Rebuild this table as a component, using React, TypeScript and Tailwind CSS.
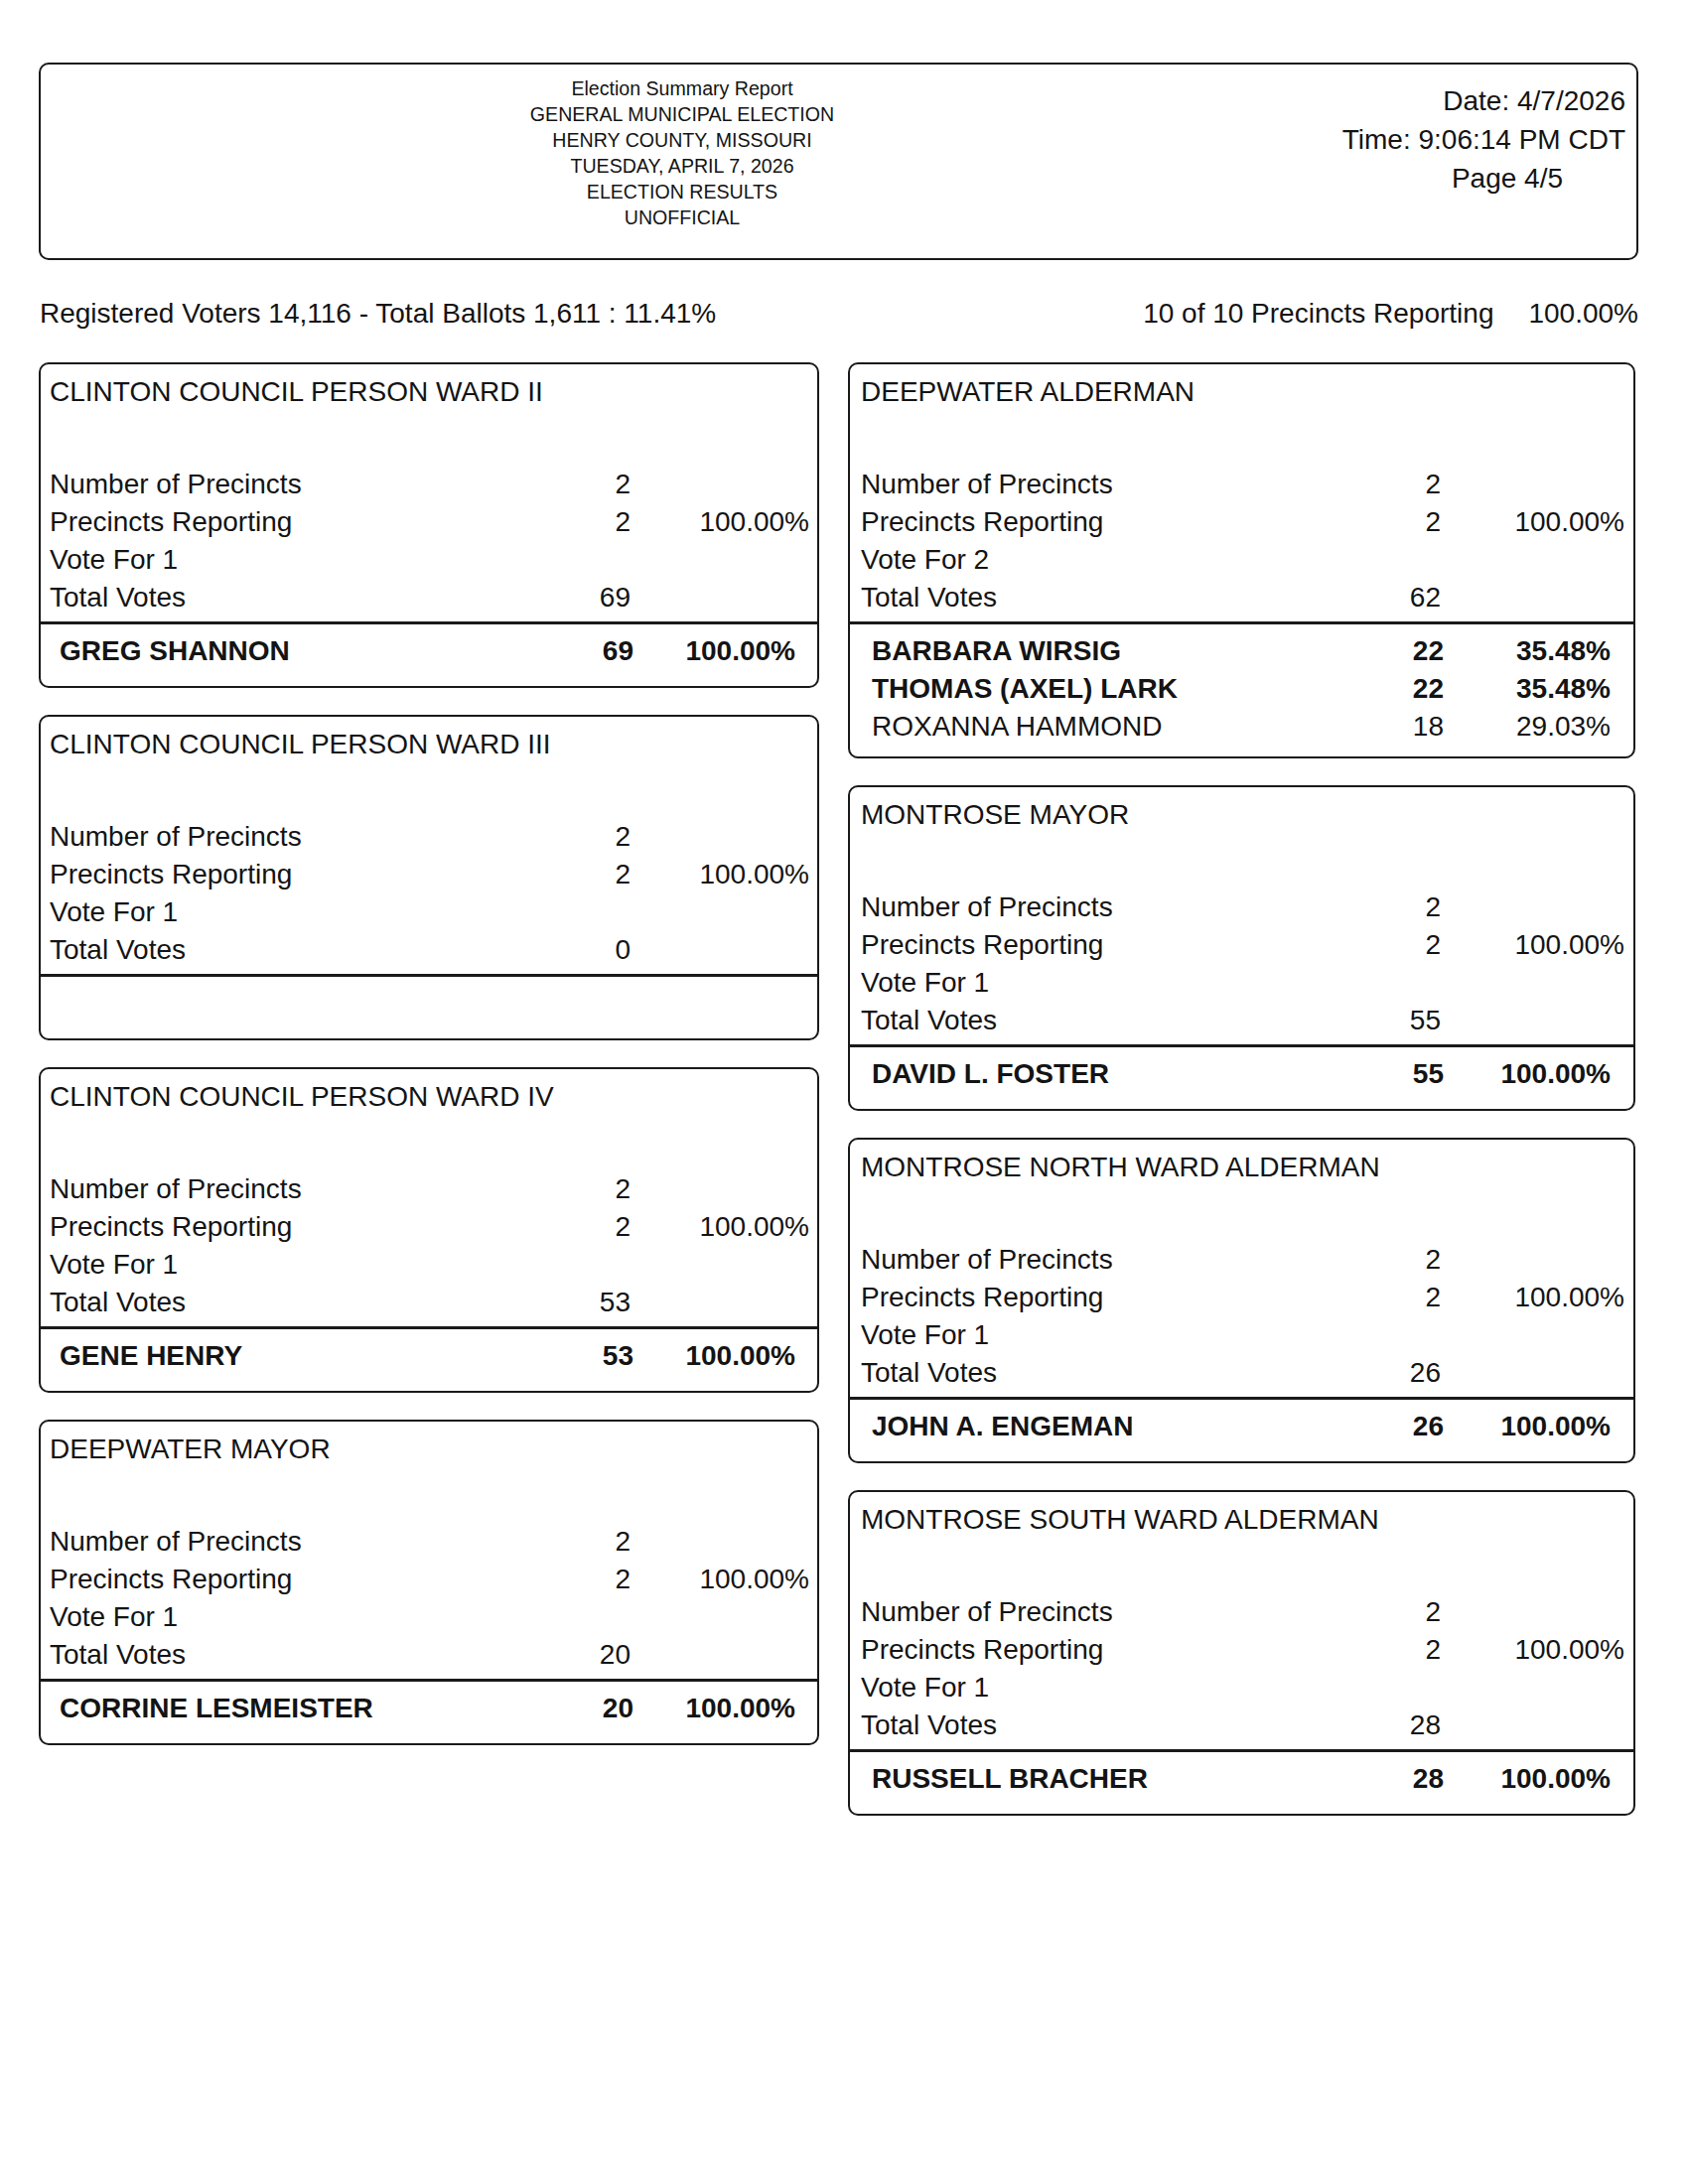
import React from 'react'

type Candidate = { name: string; votes: number; pct: string; bold?: boolean }
type Contest = {
  title: string
  voteFor: number
  totalVotes: number
  candidates: Candidate[]
}

const leftContests: Contest[] = [
  {
    title: 'CLINTON COUNCIL PERSON WARD II',
    voteFor: 1,
    totalVotes: 69,
    candidates: [{ name: 'GREG SHANNON', votes: 69, pct: '100.00%', bold: true }],
  },
  {
    title: 'CLINTON COUNCIL PERSON WARD III',
    voteFor: 1,
    totalVotes: 0,
    candidates: [],
  },
  {
    title: 'CLINTON COUNCIL PERSON WARD IV',
    voteFor: 1,
    totalVotes: 53,
    candidates: [{ name: 'GENE HENRY', votes: 53, pct: '100.00%', bold: true }],
  },
  {
    title: 'DEEPWATER MAYOR',
    voteFor: 1,
    totalVotes: 20,
    candidates: [{ name: 'CORRINE LESMEISTER', votes: 20, pct: '100.00%', bold: true }],
  },
]

const rightContests: Contest[] = [
  {
    title: 'DEEPWATER ALDERMAN',
    voteFor: 2,
    totalVotes: 62,
    candidates: [
      { name: 'BARBARA WIRSIG', votes: 22, pct: '35.48%', bold: true },
      { name: 'THOMAS (AXEL) LARK', votes: 22, pct: '35.48%', bold: true },
      { name: 'ROXANNA HAMMOND', votes: 18, pct: '29.03%' },
    ],
  },
  {
    title: 'MONTROSE MAYOR',
    voteFor: 1,
    totalVotes: 55,
    candidates: [{ name: 'DAVID L. FOSTER', votes: 55, pct: '100.00%', bold: true }],
  },
  {
    title: 'MONTROSE NORTH WARD ALDERMAN',
    voteFor: 1,
    totalVotes: 26,
    candidates: [{ name: 'JOHN A. ENGEMAN', votes: 26, pct: '100.00%', bold: true }],
  },
  {
    title: 'MONTROSE SOUTH WARD ALDERMAN',
    voteFor: 1,
    totalVotes: 28,
    candidates: [{ name: 'RUSSELL BRACHER', votes: 28, pct: '100.00%', bold: true }],
  },
]

function StatRow({
  label,
  value,
  pct,
  wide,
}: {
  label: string
  value?: string | number
  pct?: string
  wide?: boolean
}) {
  return (
    <div
      className={`grid h-[38px] items-center ${
        wide ? 'grid-cols-[1fr_100px_185px]' : 'grid-cols-[1fr_100px_180px]'
      }`}
    >
      <span>{label}</span>
      <span className="text-right">{value}</span>
      <span className="text-right">{pct}</span>
    </div>
  )
}

function ContestBox({ contest, wide }: { contest: Contest; wide?: boolean }) {
  return (
    <div className="rounded-[10px] border-2 border-[#1a1a1a]">
      <div className={`pt-[9px] pb-[7px] ${wide ? 'pl-[11px] pr-[9px]' : 'pl-[9px] pr-[8px]'}`}>
        <div className="h-[38px] leading-[38px]">{contest.title}</div>
        <div className="mt-[53px]">
          <StatRow label="Number of Precincts" value={2} wide={wide} />
          <StatRow label="Precincts Reporting" value={2} pct="100.00%" wide={wide} />
          <StatRow label={`Vote For ${contest.voteFor}`} wide={wide} />
          <StatRow label="Total Votes" value={contest.totalVotes} wide={wide} />
        </div>
      </div>
      <div className="h-[3px] bg-[#1a1a1a]" />
      <div
        className={`min-h-[62px] pt-[6px] pb-[13px] ${wide ? 'pl-[22px] pr-[23px]' : 'pl-[19px] pr-[22px]'}`}
      >
        {contest.candidates.map((c) => (
          <div
            key={c.name}
            className={`grid h-[38px] items-center ${
              wide ? 'grid-cols-[1fr_100px_168px]' : 'grid-cols-[1fr_100px_163px]'
            } ${c.bold ? 'font-bold' : ''}`}
          >
            <span>{c.name}</span>
            <span className="text-right">{c.votes}</span>
            <span className="text-right">{c.pct}</span>
          </div>
        ))}
      </div>
    </div>
  )
}

export default function App() {
  return (
    <div className="min-h-[2200px] bg-white font-['Liberation_Sans',Arial,sans-serif] text-[#141414]">
      <div className="ml-[39px] w-[1611px] pt-[63px]">
        {/* Report header */}
        <div className="flex h-[199px] rounded-[10px] border-2 border-[#1a1a1a]">
          <div className="ml-[396px] w-[500px] pt-[11px] text-center text-[19.6px] leading-[26px]">
            <div>Election Summary Report</div>
            <div>GENERAL MUNICIPAL ELECTION</div>
            <div>HENRY COUNTY, MISSOURI</div>
            <div>TUESDAY, APRIL 7, 2026</div>
            <div>ELECTION RESULTS</div>
            <div>UNOFFICIAL</div>
          </div>
          <div className="flex-1" />
          <div className="pt-[17px] pr-[11px] text-right text-[28px] leading-[39px]">
            <div>Date: 4/7/2026</div>
            <div>Time: 9:06:14 PM CDT</div>
            <div className="pr-[63px]">Page 4/5</div>
          </div>
        </div>

        {/* Turnout line */}
        <div className="mt-[35px] flex h-[38px] items-center justify-between pl-[1px] text-[28px]">
          <span>Registered Voters 14,116 - Total Ballots 1,611 : 11.41%</span>
          <span className="flex gap-[35px]">
            <span>10 of 10 Precincts Reporting</span>
            <span>100.00%</span>
          </span>
        </div>

        {/* Contests */}
        <div className="mt-[30px] grid grid-cols-[786px_793px] items-start gap-x-[29px] text-[28px]">
          <div className="flex flex-col gap-[27px]">
            {leftContests.map((c) => (
              <ContestBox key={c.title} contest={c} />
            ))}
          </div>
          <div className="flex flex-col gap-[27px]">
            {rightContests.map((c) => (
              <ContestBox key={c.title} contest={c} wide />
            ))}
          </div>
        </div>
      </div>
    </div>
  )
}
